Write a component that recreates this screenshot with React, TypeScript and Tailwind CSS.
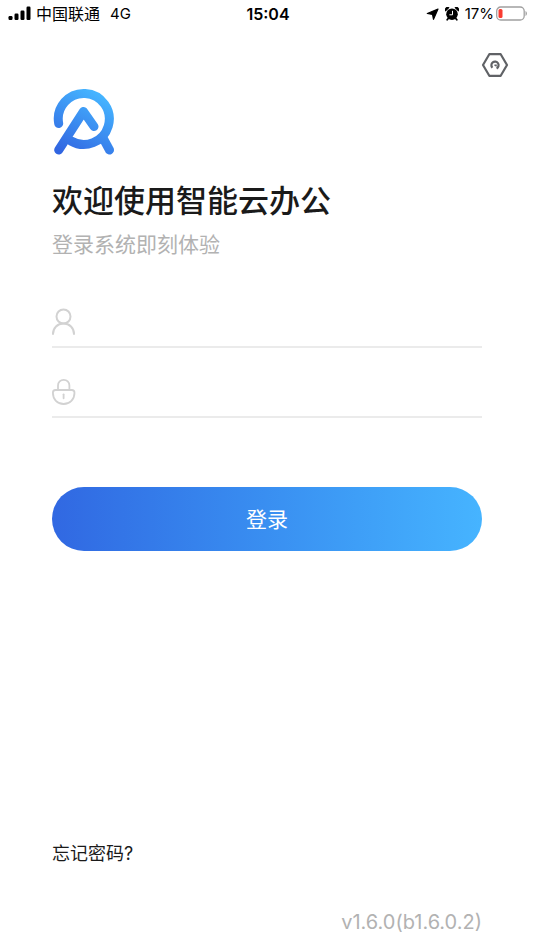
import { useState } from "react";
import type { ReactNode } from "react";

function SignalIcon() {
  return (
    <svg width="24" height="16" viewBox="0 0 24 16" aria-hidden="true">
      <rect x="0.5" y="10" width="4" height="4" rx="1.2" />
      <rect x="6.5" y="7.500" width="4" height="6.500" rx="1.2" />
      <rect x="12.5" y="4.500" width="4" height="9.500" rx="1.2" />
      <rect x="18.5" y="0.500" width="4" height="13.5" rx="1.2" />
    </svg>
  );
}

function LocationIcon() {
  return (
    <svg width="13" height="13" viewBox="0 0 13 13" aria-hidden="true">
      <path
        d="M12 1 7.500 11.300 6.500 6.400 1.300 5.500Z"
        stroke="#000"
        strokeWidth="1.200"
        strokeLinejoin="round"
      />
    </svg>
  );
}

function AlarmIcon() {
  return (
    <svg width="14" height="14" viewBox="0 0 14 14" aria-hidden="true">
      <path d="M.6 4.500A2.400 2.400 0 0 1 4.500.7ZM13.400 4.500A2.400 2.400 0 0 0 9.500.7Z" />
      <circle cx="7" cy="7.200" r="5.800" />
      <path d="m3.400 11.300-1.200 1.500M10.600 11.300l1.200 1.500" stroke="#000" strokeWidth="1.800" strokeLinecap="round" />
      <path d="M7.500 4.200v3.600H4.800" fill="none" stroke="#fff" strokeWidth="1" strokeLinecap="round" />
    </svg>
  );
}

function BatteryIcon() {
  return (
    <svg width="32" height="16" viewBox="0 0 32 16" aria-hidden="true">
      <rect x="0.700" y="1" width="27.500" height="13" rx="4" fill="none" stroke="#a0a0a0" strokeWidth="1.300" />
      <rect x="2.500" y="3" width="4" height="9" rx="1.500" fill="#f93b30" />
      <path d="M29.500 5c1.900.7 1.900 4.300 0 5Z" fill="#a0a0a0" />
    </svg>
  );
}

function SettingsIcon() {
  return (
    <svg width="28" height="26" viewBox="0 0 28 26" fill="none" stroke="#606266" strokeWidth="2.200" aria-hidden="true">
      <path d="M8.300 2.200h11.400L26 13l-6.300 10.800H8.300L2 13Z" strokeLinejoin="round" />
      <path d="M11.400 15.700a3.600 3.600 0 1 1 4.200.700" />
      <path d="M13.400 13.300h1.700v1.200" strokeWidth="1.400" />
    </svg>
  );
}

function Logo() {
  return (
    <svg width="64" height="68" viewBox="0 0 64 68" fill="none" role="img" aria-label="智能云办公">
      <defs>
        <linearGradient id="logo" gradientUnits="userSpaceOnUse" x1="46" y1="6" x2="12" y2="66">
          <stop offset="0" stopColor="#45b4ff" />
          <stop offset="1" stopColor="#3165e1" />
        </linearGradient>
      </defs>
      <g stroke="url(#logo)" strokeWidth="9" strokeLinecap="round" strokeLinejoin="round">
        <path d="M6.700 35.500A25.500 25.500 0 1 1 19 53" />
        <path d="M6.700 62 31.500 23.500 42 38.500" />
        <path d="M51 50 57.500 62" />
      </g>
    </svg>
  );
}

function UserIcon() {
  return (
    <svg width="24" height="28" viewBox="0 0 24 28" fill="none" stroke="#d2d2d2" strokeWidth="2" strokeLinecap="round" aria-hidden="true">
      <circle cx="11.500" cy="8.500" r="7" />
      <path d="M1 26c0-6 4.500-10.500 10.500-10.500S22 20 22 26" />
    </svg>
  );
}

function LockIcon() {
  return (
    <svg width="24" height="28" viewBox="0 0 24 28" fill="none" stroke="#d2d2d2" strokeWidth="1.800" strokeLinecap="round" aria-hidden="true">
      <path d="M6 12V7.500a5.700 5.700 0 0 1 11.400 0V12" />
      <path d="M3.500 12h16.300c1.700 0 2.700 1 2.700 2.700 0 6.500-4.600 11.300-10.900 11.300S.900 21.200.900 14.700C.900 13 1.800 12 3.500 12Z" />
      <path d="M11.600 16.300v4" />
    </svg>
  );
}

type FieldProps = {
  label: string;
  type: string;
  icon: ReactNode;
};

function Field({ label, type, icon }: FieldProps) {
  const [value, setValue] = useState("");
  return (
    <label className="flex h-[70px] items-end gap-3 border-b-2 border-[#ebebeb] pb-2.5">
      {icon}
      <input
        type={type}
        aria-label={label}
        value={value}
        onChange={(e) => setValue(e.target.value)}
        className="h-7 min-w-0 flex-1 bg-transparent text-lg text-[#1a1a1a] outline-none"
      />
    </label>
  );
}

export default function App() {
  return (
    <div className="flex min-h-screen flex-col bg-white font-[Inter,'Noto_Sans_CJK_SC',sans-serif] text-[#1a1a1a]">
      <header className="grid h-7 grid-cols-3 items-center pr-1.5 pl-2 text-base leading-7 text-black">
        <div className="flex items-center gap-1">
          <SignalIcon />
          <span className="whitespace-nowrap">中国联通</span>
          <span className="ml-1.5 text-[15px]">4G</span>
        </div>
        <time className="text-center font-semibold">15:04</time>
        <div className="flex items-center justify-end gap-1">
          <LocationIcon />
          <span className="mr-0.5 ml-0.5">
            <AlarmIcon />
          </span>
          <span className="-mr-0.5 text-[15px]">17%</span>
          <BatteryIcon />
        </div>
      </header>

      <div className="flex justify-end pt-6 pr-[25px]">
        <button type="button" aria-label="设置">
          <SettingsIcon />
        </button>
      </div>

      <main className="flex flex-1 flex-col px-[52px] pt-2.5">
        <Logo />
        <h1 className="mt-[21px] text-[31px] leading-12 font-medium">欢迎使用智能云办公</h1>
        <p className="mt-1 text-[21px] leading-8 text-[#b2b2b2]">登录系统即刻体验</p>

        <form className="mt-[17px]" onSubmit={(e) => e.preventDefault()}>
          <Field label="用户名" type="text" icon={<UserIcon />} />
          <Field label="密码" type="password" icon={<LockIcon />} />
          <button
            type="submit"
            className="mt-[69px] h-16 w-full rounded-full bg-linear-to-r from-[#3168e2] to-[#46b4ff] pt-0.5 text-[21px] text-white"
          >
            登录
          </button>
        </form>

        <a href="#forgot" className="mt-auto self-start text-lg leading-7">
          忘记密码?
        </a>
      </main>

      <footer className="px-[52px] pt-[38px] pb-3 text-right text-xl leading-8 text-[#b2b2b2]">
        v1.6.0(b1.6.0.2)
      </footer>
    </div>
  );
}
